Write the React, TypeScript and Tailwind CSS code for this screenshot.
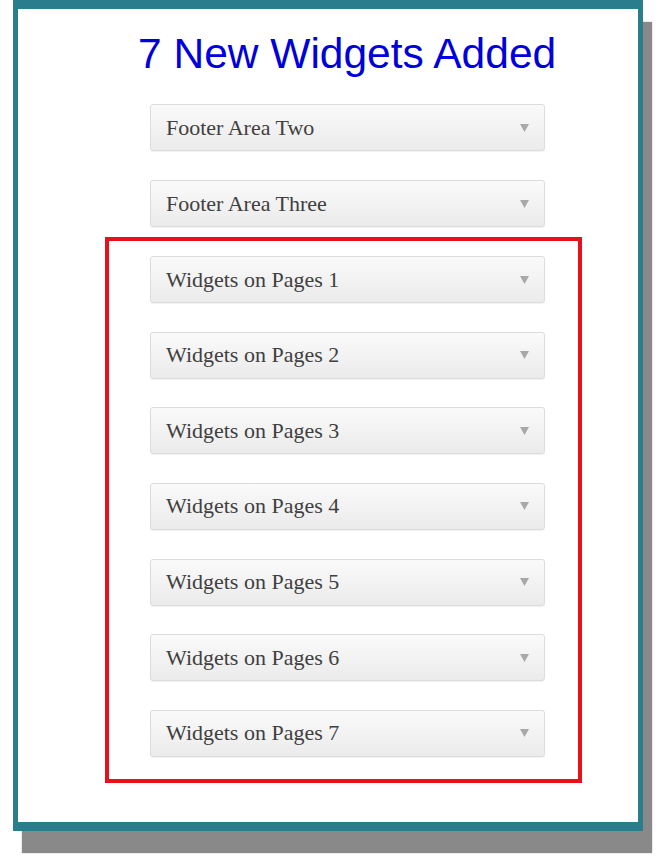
import { useMemo } from "react";

const FOOTER_AREAS = ["Footer Area Two", "Footer Area Three"];

function Caret() {
  return (
    <svg width="9" height="8" viewBox="0 0 9 8" className="flex-shrink-0">
      <polygon points="0,0 9,0 4.5,8" fill="#a8a8a8" />
    </svg>
  );
}

function SidebarBox({ title }: { title: string }) {
  return (
    <div className="flex h-[47px] w-[395px] items-center justify-between rounded-[3px] border border-[#dcdcdc] bg-gradient-to-b from-[#fafafa] to-[#ebebeb] pl-[15px] pr-[15px] shadow-[0_1px_1px_rgba(0,0,0,0.06)]">
      <span
        className="text-[22px] leading-none text-[#404040]"
        style={{ fontFamily: "Georgia, 'Liberation Serif', serif" }}
      >
        {title}
      </span>
      <Caret />
    </div>
  );
}

export default function App() {
  const pages = useMemo(() => Array.from({ length: 7 }, (_, i) => `Widgets on Pages ${i + 1}`), []);

  return (
    <div className="min-h-[863px] bg-white pt-0">
      <div className="ml-[13px] w-[630px] border-x-[5px] border-y-[9px] border-[#2a7d8d] bg-white shadow-[9px_22px_1px_#898989]">
        <h1
          className="pl-[120px] pt-[21px] text-[42.5px] leading-[48px] text-[#0000dc]"
          style={{ fontFamily: "Arial, 'Liberation Sans', sans-serif" }}
        >
          7 New Widgets Added
        </h1>

        <div className="ml-[132px] mt-[26px] flex flex-col gap-[29px]">
          {FOOTER_AREAS.map(t => (
            <SidebarBox key={t} title={t} />
          ))}
        </div>

        <div className="ml-[87px] mt-[10px] mb-[39px] w-[477px] border-4 border-[#e8101a] pb-[22px] pl-[41px] pt-[15px]">
          <div className="flex flex-col gap-[28.67px]">
            {pages.map(t => (
              <SidebarBox key={t} title={t} />
            ))}
          </div>
        </div>
      </div>
    </div>
  );
}
